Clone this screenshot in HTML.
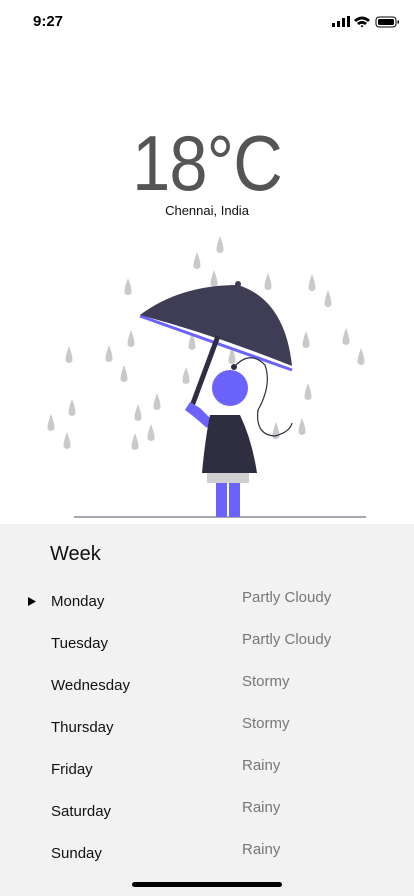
<!DOCTYPE html>
<html><head><meta charset="utf-8"><style>
*{margin:0;padding:0;box-sizing:border-box}
body{width:414px;height:896px;background:#fff;font-family:"Liberation Sans",sans-serif;position:relative;overflow:hidden}
.abs{position:absolute}
#time{left:33px;top:13px;font-size:15px;font-weight:bold;color:#000}
#temp{left:0;width:414px;top:118px;text-align:center;font-size:78px;color:#555;letter-spacing:-1px;transform:scaleX(0.88)}
#city{left:0;width:414px;top:203px;text-align:center;font-size:13px;color:#111}
#panel{left:0;top:524px;width:414px;height:372px;background:#f2f2f2}
#week{left:50px;top:543px;font-size:20px;color:#111}
.day{left:51px;font-size:15px;color:#111}
.cond{left:242px;font-size:15px;color:#777}
#bar{left:132px;top:882px;width:150px;height:5px;border-radius:3px;background:#000}
</style></head><body>
<div id="time" class="abs">9:27</div>
<svg class="abs" style="left:332px;top:15px" width="68" height="14" viewBox="0 0 68 14">
<rect x="0" y="8" width="3" height="4" fill="#000"/><rect x="5" y="6" width="3" height="6" fill="#000"/><rect x="10" y="3" width="3" height="9" fill="#000"/><rect x="15" y="1" width="3" height="11" fill="#000"/>
<path d="M22 5 Q30 -2 38 5 L36 7 Q30 2 24 7Z M25 8 Q30 4 35 8 L33 10 Q30 7.5 27 10Z M28.5 11 Q30 9.5 31.5 11 L30 12.5Z" fill="#000"/>
<rect x="44" y="2" width="20" height="10" rx="3" fill="none" stroke="#000" stroke-width="1"/><rect x="46" y="4" width="16" height="6" rx="1.5" fill="#000"/><rect x="65.5" y="5.5" width="1.5" height="3" fill="#000"/>
</svg>
<div id="temp" class="abs">18°C</div>
<div id="city" class="abs">Chennai, India</div>
<svg class="abs" style="left:0;top:230px" width="414" height="294" viewBox="0 230 414 294">
<defs><path id="drop" d="M0 -10 Q4.5 2 3.2 5.5 Q0 8.5 -3.2 5.5 Q-4.5 2 0 -10Z"/></defs>
<g fill="#c9c9c9">
<use href="#drop" x="220" y="246"/><use href="#drop" x="197" y="262"/><use href="#drop" x="128" y="288"/><use href="#drop" x="214" y="280"/><use href="#drop" x="232" y="293"/><use href="#drop" x="244" y="308"/><use href="#drop" x="268" y="283"/><use href="#drop" x="312" y="284"/><use href="#drop" x="328" y="300"/><use href="#drop" x="306" y="341"/><use href="#drop" x="346" y="338"/><use href="#drop" x="361" y="358"/><use href="#drop" x="131" y="340"/><use href="#drop" x="109" y="355"/><use href="#drop" x="69" y="356"/><use href="#drop" x="124" y="375"/><use href="#drop" x="186" y="377"/><use href="#drop" x="192" y="343"/><use href="#drop" x="308" y="393"/><use href="#drop" x="157" y="403"/><use href="#drop" x="72" y="409"/><use href="#drop" x="138" y="414"/><use href="#drop" x="51" y="424"/><use href="#drop" x="135" y="443"/><use href="#drop" x="67" y="442"/><use href="#drop" x="151" y="434"/><use href="#drop" x="302" y="428"/><use href="#drop" x="276" y="432"/><use href="#drop" x="232" y="357"/>
</g>
<line x1="74" y1="517" x2="366" y2="517" stroke="#8a8a95" stroke-width="1.5"/>
<path d="M140 316 L292 370" stroke="#6c63ff" stroke-width="3" fill="none"/>
<path d="M140 315 Q180 285 238 285 Q285 300 292 366 Q215 335 140 315Z" fill="#3f3d56"/>
<circle cx="238" cy="284" r="3" fill="#3f3d56"/>
<line x1="218" y1="336" x2="192" y2="406" stroke="#2f2e41" stroke-width="5"/>
<path d="M235 366 Q250 350 265 365 Q272 385 258 410 Q255 435 275 436 Q290 432 292 423" fill="none" stroke="#2f2e41" stroke-width="1.2"/>
<path d="M190 402 L200 408 L212 420 L207 428 L193 416 L185 410Z" fill="#6c63ff"/>
<circle cx="230" cy="388" r="18" fill="#6c63ff"/>
<circle cx="234" cy="367" r="3" fill="#2f2e41"/>
<path d="M210 415 L240 415 Q252 440 257 473 L202 473 Q205 440 210 415Z" fill="#2f2e41"/>
<rect x="207" y="473" width="42" height="10" fill="#d0d0d0"/>
<rect x="216" y="483" width="11" height="34" fill="#6c63ff"/>
<rect x="229" y="483" width="11" height="34" fill="#6c63ff"/>
</svg>
<div id="panel" class="abs"></div>
<div id="week" class="abs">Week</div>
<svg class="abs" style="left:28px;top:597px" width="9" height="10"><path d="M0 0 L8 4.5 L0 9Z" fill="#000"/></svg>
<div class="abs day" style="top:593px">Monday</div><div class="abs cond" style="top:589px">Partly Cloudy</div>
<div class="abs day" style="top:635px">Tuesday</div><div class="abs cond" style="top:631px">Partly Cloudy</div>
<div class="abs day" style="top:677px">Wednesday</div><div class="abs cond" style="top:673px">Stormy</div>
<div class="abs day" style="top:719px">Thursday</div><div class="abs cond" style="top:715px">Stormy</div>
<div class="abs day" style="top:761px">Friday</div><div class="abs cond" style="top:757px">Rainy</div>
<div class="abs day" style="top:803px">Saturday</div><div class="abs cond" style="top:799px">Rainy</div>
<div class="abs day" style="top:845px">Sunday</div><div class="abs cond" style="top:841px">Rainy</div>
<div id="bar" class="abs"></div>
</body></html>
